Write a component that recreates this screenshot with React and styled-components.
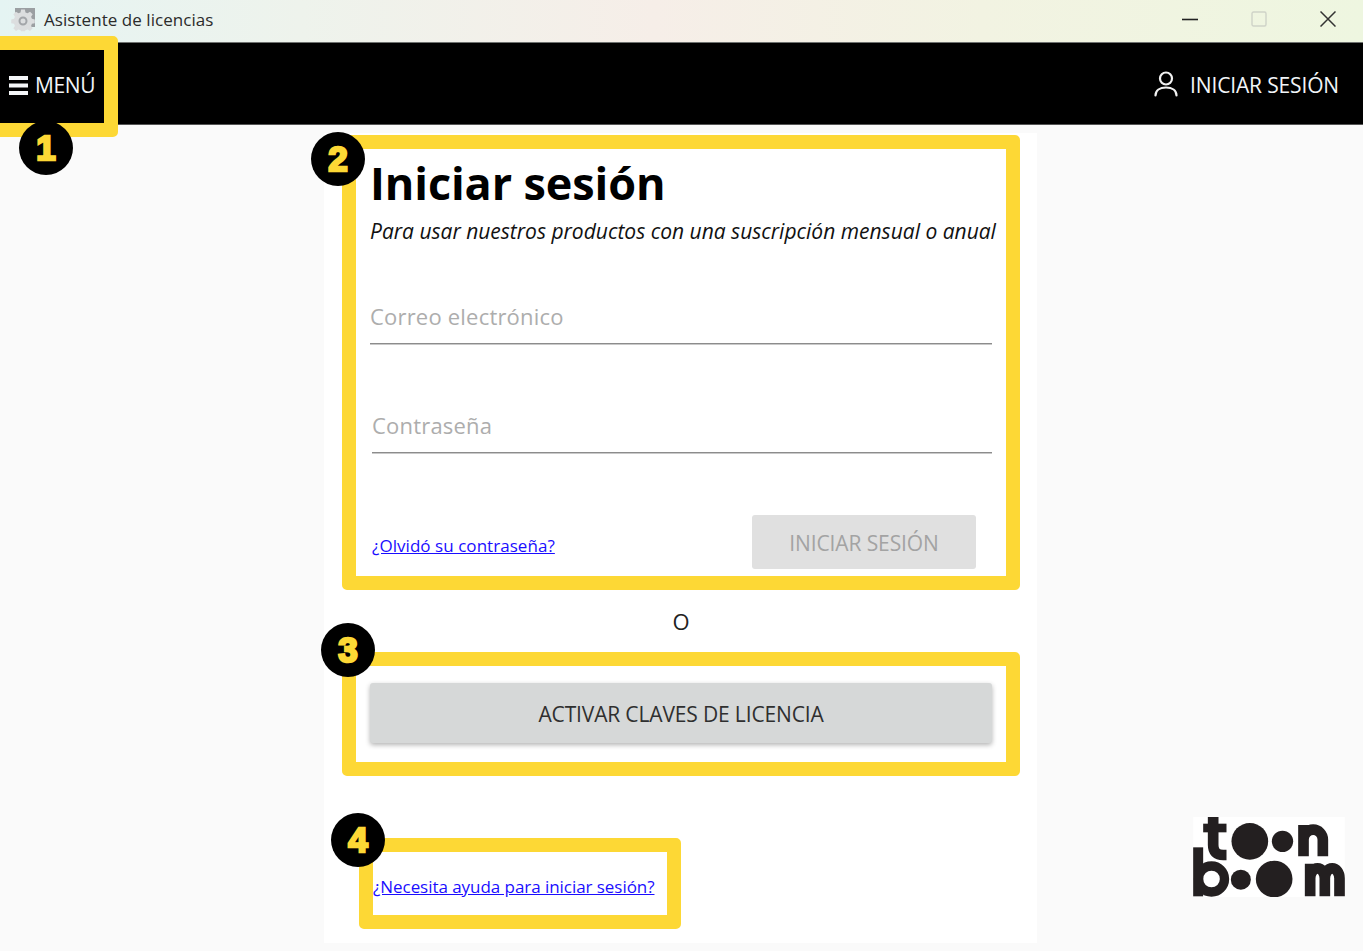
import React from "react";
import styled, { createGlobalStyle } from "styled-components";

const Global = createGlobalStyle`
  html, body { margin: 0; padding: 0; background: #fafafa; }
  body { font-family: "Open Sans", "Noto Sans", sans-serif; overflow: hidden; }
  * { box-sizing: border-box; }
`;

const Window = styled.div`
  position: relative;
  width: 1363px;
  height: 951px;
  overflow: hidden;
  display: flex;
  flex-direction: column;
`;

const TitleBar = styled.div`
  height: 43px;
  flex: none;
  display: flex;
  align-items: center;
  padding: 0 0 3px 11px;
  background: linear-gradient(90deg, #e5f4f3 0%, #eef3ec 22%, #f6eee8 48%, #f2f3e2 72%, #eef6e0 100%);
  border-bottom: 1px solid #6f7270;
`;

const AppTitle = styled.span`
  margin-left: 9px;
  font-size: 17px;
  letter-spacing: 0.05px;
  color: #2b2b2b;
`;

const WindowControls = styled.div`
  margin-left: auto;
  display: flex;
  align-items: center;
  gap: 53px;
  padding-right: 27px;
  margin-top: -1px;
`;

const Header = styled.header`
  height: 82px;
  flex: none;
  background: #000;
  border-bottom: 1px solid #555;
  display: flex;
  align-items: center;
  justify-content: space-between;
  padding: 3px 24px 0 9px;
  color: #f1f5f8;
  font-size: 21px;
`;

const HeaderItem = styled.div`
  display: flex;
  align-items: center;
  gap: ${(p) => p.$gap}px;
  letter-spacing: ${(p) => p.$spacing}px;
`;

const Main = styled.main`
  flex: 1;
  display: grid;
  grid-template-columns: 324px 713px 1fr;
`;

const Card = styled.section`
  grid-column: 2;
  margin: 8px 0;
  background: #fff;
  padding: 2px 17px 0 18px;
  height: 810px;
`;

const Frame = styled.div`
  border: 14px solid #fdd835;
  border-radius: 5px;
`;

const LoginFrame = styled(Frame)`
  height: 455px;
  padding: 8px 14px 0;
`;

const Title = styled.h1`
  margin: 0;
  font-size: 45px;
  line-height: 52px;
  font-weight: 700;
  letter-spacing: -0.1px;
  color: #000;
`;

const Subtitle = styled.p`
  margin: 9px 0 0;
  font-size: 21px;
  line-height: 26px;
  font-style: italic;
  color: #111;
  white-space: nowrap;
`;

const Field = styled.div`
  margin-top: ${(p) => p.$top}px;
  margin-left: ${(p) => p.$left}px;
  width: ${(p) => p.$width}px;
  height: 43px;
  border-bottom: 1px solid #8c8c8c;
  box-shadow: 0 1px 0 #c9c9c9;
  font-size: 22px;
  line-height: 30px;
  letter-spacing: 0.2px;
  color: #adadad;
`;

const FormFoot = styled.div`
  margin: 62px 0 0 2px;
  width: 604px;
  display: flex;
  align-items: flex-end;
  justify-content: space-between;
`;

const HelpLink = styled.a`
  font-size: 17px;
  line-height: 24px;
  letter-spacing: ${(p) => p.$spacing}px;
  color: #1a0dff;
  text-decoration: underline;
  white-space: nowrap;
`;

const ForgotLink = styled(HelpLink)`
  margin-bottom: 11px;
`;

const DisabledButton = styled.button`
  width: 224px;
  height: 54px;
  border: 0;
  padding: 1px 0 0;
  border-radius: 3px;
  background: #e0e0e0;
  color: #a3a3a3;
  font: 400 21px "Open Sans", sans-serif;
  letter-spacing: -0.1px;
`;

const OrText = styled.div`
  height: 62px;
  display: flex;
  align-items: center;
  justify-content: center;
  font-size: 22px;
  color: #222;
`;

const ActivateFrame = styled(Frame)`
  height: 124px;
  padding: 17px 14px 0;
`;

const ActivateButton = styled.button`
  width: 100%;
  height: 60px;
  border: 0;
  padding: 2px 0 0;
  border-radius: 3px;
  background: #d6d8d8;
  color: #2f2f2f;
  font: 400 21px "Open Sans", sans-serif;
  letter-spacing: -0.15px;
  box-shadow: 0 2px 5px rgba(0, 0, 0, 0.3);
`;

const HelpFrame = styled(Frame)`
  margin: 62px 0 0 17px;
  width: 322px;
  height: 91px;
  padding: 23px 0 0 0;
  white-space: nowrap;
`;

const LogoSlot = styled.div`
  grid-column: 3;
  align-self: end;
  justify-self: end;
  margin: 0 18px 54px 0;
  line-height: 0;
`;

const Badge = styled.div`
  position: absolute;
  left: ${(p) => p.$x - 27}px;
  top: ${(p) => p.$y - 27}px;
  width: 54px;
  height: 54px;
  border-radius: 50%;
  background: #000;
  color: #fdd835;
  display: flex;
  align-items: center;
  justify-content: center;
  font: 700 35px "Liberation Sans", sans-serif;
  -webkit-text-stroke: 2.5px #fdd835;
`;

const MenuHighlight = styled.div`
  position: absolute;
  left: -14px;
  top: 36px;
  width: 132px;
  height: 101px;
  border: 14px solid #fdd835;
  border-radius: 5px;
`;

const GearIcon = () => (
  <svg width="24" height="24" viewBox="0 0 24 24">
    <rect x="4" y="0" width="20" height="19" fill="#9b9fa2" />
    <path
      d="M10 1h4l.6 3 2.2.9 2.6-1.7 2.8 2.8-1.7 2.6.9 2.2 3 .6v4l-3 .6-.9 2.2 1.7 2.6-2.8 2.8-2.6-1.7-2.2.9-.6 1h-4l-.6-1-2.2-.9-2.6 1.7-2.8-2.8 1.7-2.6-.9-2.2-3-.6v-4l3-.6.9-2.2-1.7-2.6 2.8-2.8 2.6 1.7 2.2-.9z"
      transform="translate(0.6 0.6) scale(0.95)"
      fill="#dcdedf"
    />
    <circle cx="12" cy="13" r="3.5" fill="none" stroke="#a3a6a9" strokeWidth="2" />
  </svg>
);

const MinimizeIcon = () => (
  <svg width="16" height="16" viewBox="0 0 16 16">
    <path d="M0 8.5h16" stroke="#222" strokeWidth="1.6" />
  </svg>
);
const MaximizeIcon = () => (
  <svg width="16" height="16" viewBox="0 0 16 16">
    <rect x="1" y="1" width="14" height="14" rx="1.5" fill="none" stroke="#cfd3c8" strokeWidth="1.4" />
  </svg>
);
const CloseIcon = () => (
  <svg width="16" height="16" viewBox="0 0 16 16">
    <path d="M0.5 0.5l15 15M15.5 0.5l-15 15" stroke="#333" strokeWidth="1.5" />
  </svg>
);

const HamburgerIcon = () => (
  <svg width="19" height="19" viewBox="0 0 19 19">
    <path d="M0 2h19M0 9.5h19M0 17h19" stroke="#f4f6f8" strokeWidth="3.8" />
  </svg>
);

const UserIcon = () => (
  <svg width="26" height="28" viewBox="0 0 26 28" fill="none" stroke="#f1f1f1" strokeWidth="2.2" strokeLinecap="round">
    <circle cx="13" cy="7.5" r="6" />
    <path d="M2.5 24.5c0-5.2 4.4-8 10.5-8s10.5 2.8 10.5 8" />
  </svg>
);

const Logo = () => (
  <svg width="152" height="80" viewBox="0 0 455 240">
    <rect width="455" height="240" fill="#fff" />
    <g fill="#231f20">
      <circle cx="170" cy="73" r="55" />
      <circle cx="268" cy="73" r="32" />
      <circle cx="143" cy="188" r="30" />
      <circle cx="243" cy="186" r="55" />
    </g>
    <g fill="none" stroke="#231f20" strokeWidth="32">
      <path d="M30 33h70" strokeWidth="26" />
      <path d="M60 0v84q0 30 30 30h10" />
      <path d="M331 118V24M331 68a29 30 0 0 1 58 0V118" />
      <path d="M15 91v147" strokeWidth="30" />
      <circle cx="55" cy="186" r="39" strokeWidth="28" />
      <path d="M351 238V140M351 184a22 30 0 0 1 44 0V238M395 184a22 30 0 0 1 44 0V238" />
    </g>
  </svg>
);

export default function App() {
  return (
    <Window>
      <Global />
      <TitleBar>
        <GearIcon />
        <AppTitle>Asistente de licencias</AppTitle>
        <WindowControls>
          <MinimizeIcon />
          <MaximizeIcon />
          <CloseIcon />
        </WindowControls>
      </TitleBar>
      <Header>
        <HeaderItem $gap={7} $spacing={-0.4}>
          <HamburgerIcon />
          <span>MENÚ</span>
        </HeaderItem>
        <HeaderItem $gap={11} $spacing={-0.15}>
          <UserIcon />
          <span>INICIAR SESIÓN</span>
        </HeaderItem>
      </Header>
      <Main>
        <Card>
          <LoginFrame>
            <Title>Iniciar sesión</Title>
            <Subtitle>Para usar nuestros productos con una suscripción mensual o anual</Subtitle>
            <Field $top={57} $left={0} $width={622}>Correo electrónico</Field>
            <Field $top={66} $left={2} $width={620}>Contraseña</Field>
            <FormFoot>
              <ForgotLink href="#" $spacing={0.05}>¿Olvidó su contraseña?</ForgotLink>
              <DisabledButton>INICIAR SESIÓN</DisabledButton>
            </FormFoot>
          </LoginFrame>
          <OrText>O</OrText>
          <ActivateFrame>
            <ActivateButton>ACTIVAR CLAVES DE LICENCIA</ActivateButton>
          </ActivateFrame>
          <HelpFrame>
            <HelpLink href="#" $spacing={-0.05}>¿Necesita ayuda para iniciar sesión?</HelpLink>
          </HelpFrame>
        </Card>
        <LogoSlot>
          <Logo />
        </LogoSlot>
      </Main>
      <MenuHighlight />
      <Badge $x={46} $y={148}>1</Badge>
      <Badge $x={338} $y={159}>2</Badge>
      <Badge $x={348} $y={650}>3</Badge>
      <Badge $x={358} $y={840}>4</Badge>
    </Window>
  );
}
